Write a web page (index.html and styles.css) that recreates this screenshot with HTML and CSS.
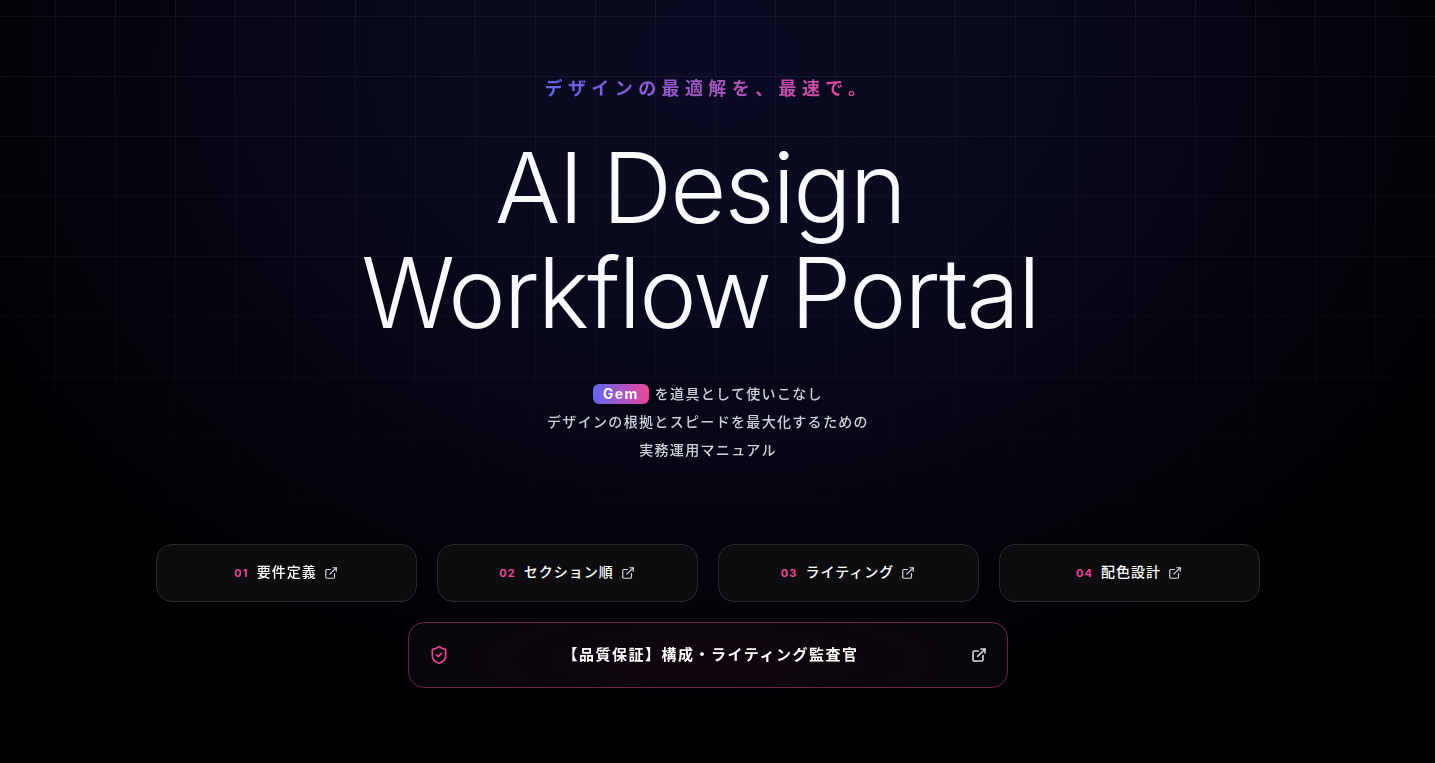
FILE: index.html
```html
<!DOCTYPE html>
<html lang="ja">
<head>
  <meta charset="UTF-8">
  <meta name="viewport" content="width=device-width, initial-scale=1.0">
  <title>AI Design Workflow Portal</title>
  <link rel="stylesheet" href="styles.css">
</head>
<body>
  <div class="grid-bg"></div>
  <main class="page">
    <section class="hero">
      <p class="tagline">デザインの最適解を、最速で。</p>
      <h1 class="title">AI Design<br>Workflow Portal</h1>
      <div class="lead">
        <p><span class="gem">Gem</span> を道具として使いこなし</p>
        <p>デザインの根拠とスピードを最大化するための</p>
        <p>実務運用マニュアル</p>
      </div>
    </section>

    <!-- ステップ -->
    <nav class="steps">
      <a class="step" href="#"><span class="step-num">01</span><span class="step-name">要件定義</span>
        <svg class="ext" viewBox="0 0 24 24"><path d="M18 13v6a2 2 0 0 1-2 2H5a2 2 0 0 1-2-2V8a2 2 0 0 1 2-2h6"/><path d="M15 3h6v6"/><path d="M10 14 21 3"/></svg></a>
      <a class="step" href="#"><span class="step-num">02</span><span class="step-name">セクション順</span>
        <svg class="ext" viewBox="0 0 24 24"><path d="M18 13v6a2 2 0 0 1-2 2H5a2 2 0 0 1-2-2V8a2 2 0 0 1 2-2h6"/><path d="M15 3h6v6"/><path d="M10 14 21 3"/></svg></a>
      <a class="step" href="#"><span class="step-num">03</span><span class="step-name">ライティング</span>
        <svg class="ext" viewBox="0 0 24 24"><path d="M18 13v6a2 2 0 0 1-2 2H5a2 2 0 0 1-2-2V8a2 2 0 0 1 2-2h6"/><path d="M15 3h6v6"/><path d="M10 14 21 3"/></svg></a>
      <a class="step" href="#"><span class="step-num">04</span><span class="step-name">配色設計</span>
        <svg class="ext" viewBox="0 0 24 24"><path d="M18 13v6a2 2 0 0 1-2 2H5a2 2 0 0 1-2-2V8a2 2 0 0 1 2-2h6"/><path d="M15 3h6v6"/><path d="M10 14 21 3"/></svg></a>
    </nav>

    <a class="audit" href="#">
      <svg class="shield" viewBox="0 0 24 24"><path d="M20 13c0 5-3.500 7.500-7.660 8.950a1 1 0 0 1-.670-.010C7.500 20.500 4 18 4 13V6a1 1 0 0 1 1-1c2 0 4.500-1.200 6.240-2.720a1.170 1.170 0 0 1 1.520 0C14.510 3.810 17 5 19 5a1 1 0 0 1 1 1z"/><path d="m9 12 2 2 4-4"/></svg>
      <span class="audit-name">【品質保証】構成・ライティング監査官</span>
      <svg class="ext ext-big" viewBox="0 0 24 24"><path d="M18 13v6a2 2 0 0 1-2 2H5a2 2 0 0 1-2-2V8a2 2 0 0 1 2-2h6"/><path d="M15 3h6v6"/><path d="M10 14 21 3"/></svg>
    </a>
  </main>
</body>
</html>
```
FILE: styles.css
```css
* {
  box-sizing: border-box;
}

html, body {
  height: 100%;
}

body {
  margin: 0;
  overflow: hidden;
  font-family: 'Inter', 'Noto Sans CJK JP', sans-serif;
  color: #fff;
  background-color: #000003;
  background-image: radial-gradient(ellipse 820px 640px at 717px 60px, #0a0a22 0%, #09091e 40%, #04040e 75%, #000003 100%);
}

/* グリッド: 下に向かって消える */
.grid-bg {
  position: fixed;
  inset: 0;
  background-image:
    linear-gradient(rgba(255, 255, 255, 0.06) 1px, transparent 1px),
    linear-gradient(90deg, rgba(255, 255, 255, 0.06) 1px, transparent 1px);
  background-size: 60px 60px;
  background-position: 55px 16px;
  -webkit-mask-image: linear-gradient(to bottom, #000 0, transparent 600px);
  mask-image: linear-gradient(to bottom, #000 0, transparent 600px);
}

a {
  color: inherit;
  text-decoration: none;
}

p {
  margin: 0;
}

.page {
  position: relative;
  width: 1416px;
  display: flex;
  flex-direction: column;
  align-items: center;
  padding-top: 76px;
  opacity: 0.999;
}

.hero {
  display: flex;
  flex-direction: column;
  align-items: center;
}

.tagline {
  font-size: 18px;
  line-height: 26px;
  font-weight: 700;
  letter-spacing: 0.3em;
  background: linear-gradient(90deg, #6366f1, #ec4899);
  -webkit-background-clip: text;
  background-clip: text;
  color: transparent;
}

.title {
  margin: 33px 16px 0 0;
  font-size: 97px;
  line-height: 105px;
  font-weight: 300;
  letter-spacing: -0.02em;
  word-spacing: -0.05em;
  color: #f8fafc;
  text-align: center;
  white-space: nowrap;
}

.lead {
  margin-top: 35px;
  font-size: 14px;
  line-height: 28px;
  font-weight: 500;
  letter-spacing: 0.095em;
  color: #cfd3da;
  text-align: center;
}

.gem {
  display: inline-block;
  margin-right: 1px;
  padding: 0 10px;
  height: 20px;
  line-height: 20px;
  border-radius: 6px;
  font-weight: 700;
  color: #fff;
  background: linear-gradient(90deg, #6366f1, #ec4899);
}

.steps {
  margin-top: 80px;
  width: 1104px;
  display: grid;
  grid-template-columns: repeat(4, 1fr);
  gap: 20px;
}

.step {
  height: 58px;
  padding-right: 1px;
  display: flex;
  align-items: center;
  justify-content: center;
  gap: 8px;
  background: #0e0e11;
  border: 1px solid #2c2c30;
  border-radius: 16px;
}

.step-num {
  margin-top: -1px;
  font-size: 11px;
  font-weight: 700;
  letter-spacing: 0.1em;
  color: #ec4899;
}

.step-name {
  margin-top: -4px;
  font-size: 14px;
  font-weight: 500;
  letter-spacing: 0.07em;
}

.ext {
  width: 14px;
  height: 14px;
  margin-left: -1px;
  fill: none;
  stroke: #dcdce0;
  stroke-width: 2;
  stroke-linecap: round;
  stroke-linejoin: round;
}

.audit {
  margin-top: 20px;
  width: 600px;
  height: 66px;
  padding: 0 20px;
  display: flex;
  align-items: center;
  justify-content: space-between;
  background: radial-gradient(ellipse 300px 70px at 50% 60%, #12060e, #09080c);
  border: 1px solid #752249;
  border-radius: 16px;
}

.shield {
  width: 20px;
  height: 20px;
  fill: none;
  stroke: #ec4899;
  stroke-width: 2;
  stroke-linecap: round;
  stroke-linejoin: round;
}

.audit-name {
  margin-top: -4px;
  font-size: 15px;
  font-weight: 700;
  letter-spacing: 0.1em;
}

.ext-big {
  width: 16px;
  height: 16px;
  stroke-width: 2.4;
}
```
